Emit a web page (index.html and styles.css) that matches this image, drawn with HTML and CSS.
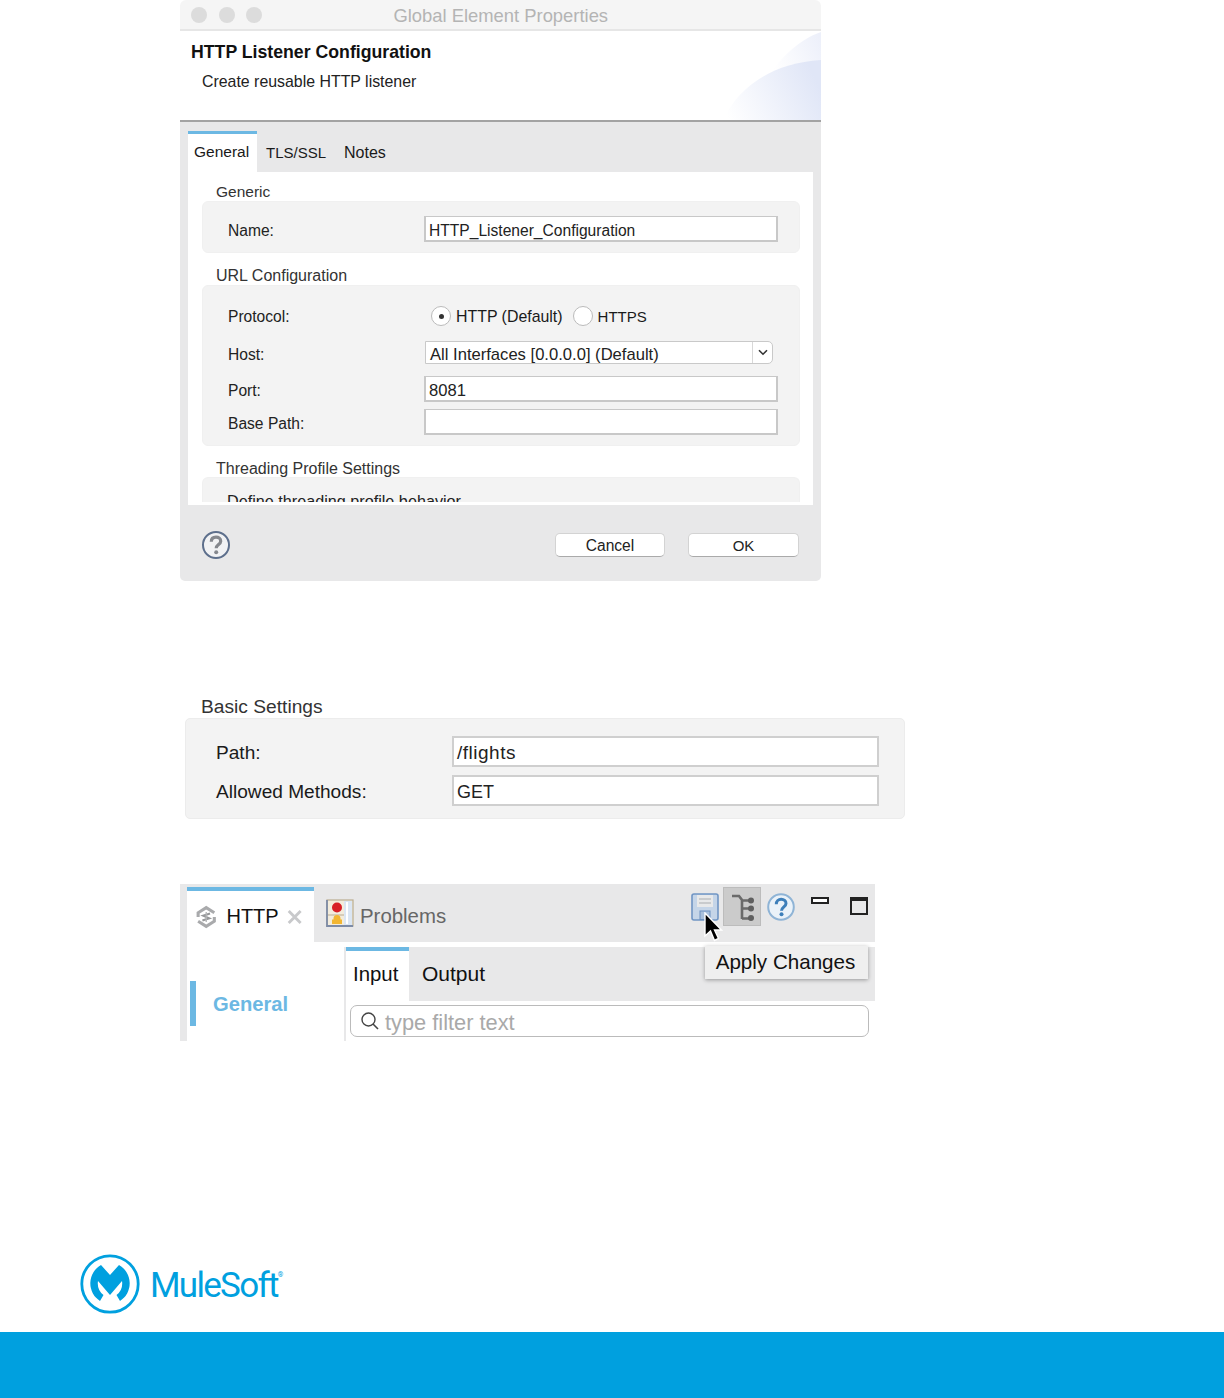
FILE: index.html
```html
<!DOCTYPE html>
<html lang="en">
<head>
<meta charset="utf-8">
<title>HTTP Listener Configuration</title>
<link rel="stylesheet" href="styles.css">
</head>
<body>
<div class="page">
  <section class="dialog">
    <div class="titlebar">
      <span class="light"></span><span class="light"></span><span class="light"></span>
      <span class="title">Global Element Properties</span>
    </div>
    <header class="dlg-head">
      <svg class="swoosh" viewBox="0 0 100 89" width="100" height="89" aria-hidden="true">
        <defs>
          <linearGradient id="sw1" x1="0" y1="0.6" x2="1" y2="0.2"><stop offset="0" stop-color="#fff"/><stop offset="1" stop-color="#edf0fa"/></linearGradient>
          <linearGradient id="sw2" x1="0" y1="0.8" x2="1" y2="0.5"><stop offset="0" stop-color="#fff"/><stop offset="1" stop-color="#e0e6f7"/></linearGradient>
        </defs>
        <path d="M48 44C58 30 76 9 100 1V30C80 31 62 36 48 44Z" fill="url(#sw1)"/>
        <path d="M2 89C18 55 52 32 100 29V89Z" fill="url(#sw2)"/>
      </svg>
      <h1 class="dlg-title">HTTP Listener Configuration</h1>
      <p class="dlg-sub">Create reusable HTTP listener</p>
    </header>
    <div class="dlg-body">
      <nav class="tabs">
        <span class="tab active">General</span>
        <span class="tab tls">TLS/SSL</span>
        <span class="tab notes">Notes</span>
      </nav>
      <div class="sheet">
        <h2 class="group-label first">Generic</h2>
        <div class="group name-group">
          <div class="row"><label>Name:</label><span class="input">HTTP_Listener_Configuration</span></div>
        </div>
        <h2 class="group-label url">URL Configuration</h2>
        <div class="group url-group">
          <div class="row protocol-row">
            <label>Protocol:</label>
            <div class="radios">
              <span class="radio on"></span><span class="radio-text first-option">HTTP (Default)</span>
              <span class="radio"></span><span class="radio-text https">HTTPS</span>
            </div>
          </div>
          <div class="row host-row">
            <label>Host:</label>
            <div class="combo"><span class="combo-text">All Interfaces [0.0.0.0] (Default)</span>
              <span class="combo-btn"><svg width="10" height="7" viewBox="0 0 10 7"><path d="M1 1.2 5 5.2 9 1.2" fill="none" stroke="#333" stroke-width="1.6"/></svg></span>
            </div>
          </div>
          <div class="row port-row"><label>Port:</label><span class="input">8081</span></div>
          <div class="row base-row"><label>Base Path:</label><span class="input"></span></div>
        </div>
        <h2 class="group-label thread">Threading Profile Settings</h2>
        <div class="group clip-group"><p class="clip-text">Define threading profile behavior</p></div>
      </div>
      <footer class="dlg-foot">
        <svg class="help" width="30" height="30" viewBox="0 0 30 30" aria-hidden="true">
          <circle cx="15" cy="15" r="13" fill="#f1f2f4" stroke="#5d6f8c" stroke-width="2"/>
          <path d="M10.3 11.8C10.3 8.8 12.3 7.2 15 7.2S19.7 8.8 19.7 11.2C19.7 14.4 15.2 14.6 15.2 18.2" fill="none" stroke="#85888e" stroke-width="3.2"/>
          <circle cx="15.2" cy="22.3" r="2" fill="#85888e"/>
        </svg>
        <div class="buttons">
          <button class="btn">Cancel</button>
          <button class="btn ok">OK</button>
        </div>
      </footer>
    </div>
  </section>

  <section class="basic">
    <h2 class="basic-label">Basic Settings</h2>
    <div class="basic-box">
      <div class="basic-row"><label>Path:</label><span class="basic-input path">/flights</span></div>
      <div class="basic-row"><label>Allowed Methods:</label><span class="basic-input">GET</span></div>
    </div>
  </section>

  <section class="editor">
    <div class="editor-bar">
      <div class="etab active">
        <svg width="24" height="26" viewBox="0 0 24 26" aria-hidden="true">
          <path d="M2.5 13V8L12 2 21.5 8" fill="none" stroke="#a9aaac" stroke-width="3.6"/>
          <path d="M21.5 13V18L12 24 2.5 18" fill="none" stroke="#a9aaac" stroke-width="3.6"/>
          <path d="M16.5 9 8.5 11.5 15.5 14.5 7.5 17" fill="none" stroke="#97989a" stroke-width="2.4"/>
          <path d="M12 7V19" stroke="#b4b5b7" stroke-width="1.6"/>
        </svg>
        <span class="etab-name http">HTTP</span>
        <svg class="close" width="18" height="18" viewBox="0 0 18 18" aria-hidden="true"><path d="M2 2 16 16M16 2 2 16" stroke="#c8c9cb" stroke-width="3.4"/></svg>
      </div>
      <div class="etab problems">
        <svg width="28" height="28" viewBox="0 0 28 28" aria-hidden="true">
          <rect x="1" y="1" width="26" height="26" fill="#f3ecdc" stroke="#b9ad92" stroke-width="1.2"/>
          <rect x="18" y="2" width="8" height="24" fill="#dbe6f3"/>
          <path d="M21 3V25" stroke="#fff" stroke-width="2"/>
          <path d="M2 16H18" stroke="#c9bfa8" stroke-width="1.4"/>
          <circle cx="11" cy="8.5" r="5" fill="#d81f26"/>
          <path d="M6 25V20.5H7.5V19.5A3.5 3.5 0 0 1 14.5 19.5V20.5H16V25Z" fill="#f2b632"/>
          <path d="M1 1V27H27" fill="none" stroke="#7d8ba6" stroke-width="1.8"/>
        </svg>
        <span class="etab-name muted">Problems</span>
      </div>
      <div class="toolbar">
        <svg class="tool" width="28" height="28" viewBox="0 0 28 28" aria-hidden="true">
          <rect x="1" y="1" width="26" height="26" rx="2" fill="#c5d5e8" stroke="#7095c4" stroke-width="1.6"/>
          <rect x="6" y="2" width="16" height="12" fill="#e8e9ea"/>
          <path d="M8 6H20M8 10H20" stroke="#bfc1c3" stroke-width="1.6"/>
          <rect x="9" y="18" width="10" height="8.5" fill="#a9c0dc" stroke="#6e92c0"/>
        </svg>
        <span class="tool-pressed">
          <svg width="26" height="28" viewBox="0 0 26 28" aria-hidden="true">
            <path d="M3 3H10L13 7V26M13 7.5H22M13 15.5H22M13 25.5H22" fill="none" stroke="#6a6a6a" stroke-width="2.6"/>
            <circle cx="22" cy="7.5" r="3" fill="#5f5f5f"/><circle cx="22" cy="15.5" r="3" fill="#5f5f5f"/><circle cx="22" cy="25" r="3" fill="#5f5f5f"/>
          </svg>
        </span>
        <svg class="tool" width="28" height="28" viewBox="0 0 28 28" aria-hidden="true">
          <circle cx="14" cy="14" r="12.8" fill="#eaf2f9" stroke="#8fb4d6" stroke-width="2"/>
          <path d="M9.3 11.2C9.3 8 11.5 6.3 14.2 6.3S19 8 19 10.5C19 13.8 14.5 14 14.5 17.8" fill="none" stroke="#3d7fba" stroke-width="3"/>
          <circle cx="14.5" cy="21.3" r="2" fill="#3d7fba"/>
        </svg>
        <span class="min-btn"></span>
        <span class="max-btn"></span>
      </div>
    </div>
    <div class="editor-main">
      <aside class="side"><span class="side-item">General</span></aside>
      <div class="pane">
        <div class="pane-tabs">
          <span class="ptab active">Input</span>
          <span class="ptab">Output</span>
        </div>
        <div class="search">
          <svg width="20" height="20" viewBox="0 0 20 20" aria-hidden="true"><circle cx="8.5" cy="8.5" r="6.5" fill="none" stroke="#444" stroke-width="1.4"/><path d="M13 13 18 18" stroke="#444" stroke-width="1.6"/></svg>
          <span class="search-text">type filter text</span>
        </div>
      </div>
    </div>
    <div class="tooltip">Apply Changes</div>
    <svg class="cursor" width="20" height="30" viewBox="0 0 20 30" aria-hidden="true"><path d="M2 1V24L7.5 19 11.5 28.5 15.5 26.5 11.5 18H18.5Z" fill="#000" stroke="#fff" stroke-width="1.4"/></svg>
  </section>

  <div class="brand">
    <svg width="60" height="60" viewBox="0 0 60 60" aria-label="MuleSoft logo">
      <circle cx="30" cy="30" r="28.2" fill="none" stroke="#00a0df" stroke-width="2.8"/>
      <path d="M21 11 30 21 39 11A21 21 0 0 1 40 47L36.5 41A15 15 0 0 0 42 27L30 41 18 27A15 15 0 0 0 23.5 41L20 47A21 21 0 0 1 21 11Z" fill="#00a0df"/>
    </svg>
    <span class="brand-name">MuleSoft<sup class="reg">®</sup></span>
  </div>
  <div class="bottom-bar"></div>
</div>
</body>
</html>
```
FILE: styles.css
```css
* { box-sizing: border-box; }
html, body { margin: 0; padding: 0; background: #fff; }
body { font-family: "Liberation Sans", Arial, sans-serif; color: #1a1a1a; }
h1, h2, p { margin: 0; font-weight: normal; }
.page { width: 1224px; height: 1398px; display: flex; flex-direction: column; overflow: hidden; }

/* Dialog */
.dialog { margin-left: 180px; width: 641px; height: 581px; display: flex; flex-direction: column; border-radius: 6px 6px 5px 5px; overflow: hidden; font-size: 15.6px; }
.titlebar { height: 31px; flex: none; background: #f5f5f5; border-bottom: 2px solid #e6e6e6; display: flex; align-items: center; padding-left: 11px; gap: 11.5px; }
.light { width: 16px; height: 16px; border-radius: 50%; background: #dcdcdc; }
.title { flex: 1; text-align: center; color: #b4b4b4; font-size: 18.4px; margin-left: -93px; padding-top: 3px; }
.dlg-head { height: 91px; flex: none; background: #fff; border-bottom: 2px solid #a3a3a3; position: relative; padding: 11px 0 0 11px; }
.swoosh { position: absolute; right: 0; top: 0; }
.dlg-title { font-size: 17.7px; font-weight: bold; color: #111; line-height: 21px; position: relative; }
.dlg-sub { font-size: 15.9px; line-height: 20px; margin: 9px 0 0 11px; position: relative; color: #222; }
.dlg-body { flex: 1; background: #e8e8e9; padding-top: 9px; display: flex; flex-direction: column; min-height: 0; }
.tabs { display: flex; height: 41px; flex: none; margin-left: 8px; }
.tab { line-height: 44px; }
.tab.active { padding: 0 6px; width: 69px; background: #fff; border-top: 3px solid #6cb8e3; line-height: 36px; font-size: 15.5px; }
.tab.tls { margin-left: 9px; font-size: 15px; }
.tab.notes { margin-left: 18px; font-size: 16px; }
.sheet { height: 333px; flex: none; background: #fff; margin: 0 8px; padding: 0 13px 0 14px; overflow: hidden; }
.group-label { font-size: 16px; line-height: 18px; padding-left: 14px; color: #333; }
.group-label.first { margin-top: 11px; font-size: 15.5px; }
.group-label.url { margin-top: 14px; }
.group-label.thread { margin-top: 14px; }
.group { background: #f3f3f3; border-radius: 6px; padding: 0 22px 0 25px; border: 1px solid #f0f0f0; }
.name-group { height: 52px; padding-top: 4px; display: flex; align-items: center; }
.url-group { height: 161px; display: flex; flex-direction: column; }
.row { display: grid; grid-template-columns: 196px 354px; align-items: center; }
.name-group .row { width: 100%; }
.row label { color: #222; padding-top: 4px; }
.row.protocol-row label { padding-top: 2px; }
.input { display: block; height: 26px; line-height: 24px; border: 2px solid #c8c8c8; border-top-width: 1.5px; background: #fff; padding: 1.5px 0 0 3px; color: #222; }
.protocol-row { height: 32px; margin-top: 14px; }
.radios { display: flex; align-items: center; padding-left: 6px; font-size: 15.9px; }
.radio { width: 20px; height: 20px; border-radius: 50%; border: 1px solid #bbb; background: #fff; position: relative; margin-left: 1px; }
.radio.on::after { content: ""; position: absolute; left: 6.5px; top: 6.5px; width: 5px; height: 5px; border-radius: 50%; background: #333; }
.radio-text { padding: 2px 10px 0 5px; }
.radio-text.first-option { padding-right: 9px; }
.radio-text.https { font-size: 15px; padding-top: 0; }
.host-row { height: 23px; margin-top: 9px; }
.combo { width: 348px; height: 23px; margin-left: 1px; display: flex; background: #fff; border: 1px solid #c9c9c9; border-radius: 0 5px 5px 0; }
.combo-text { flex: 1; padding-left: 4px; line-height: 25px; color: #222; font-size: 16.6px; white-space: nowrap; }
.combo-btn { width: 20px; border-left: 1px solid #d8d8d8; display: flex; align-items: center; justify-content: center; }
.port-row { height: 26px; margin-top: 12px; }
.port-row .input { font-size: 16.6px; }
.base-row { height: 26px; margin-top: 7px; }
.clip-group { height: 25px; margin-top: -1px; border-bottom: 0; border-radius: 6px 6px 0 0; overflow: hidden; padding-left: 24px; }
.clip-text { line-height: 18px; margin-top: 14px; color: #222; font-size: 16.2px; }
.dlg-foot { flex: 1; display: flex; align-items: center; justify-content: space-between; padding: 4px 22px 0 21px; }
.buttons { display: flex; gap: 23px; }
.btn { width: 110px; height: 24px; font: 15.6px "Liberation Sans", Arial, sans-serif; color: #222; background: #fff; border: 1px solid #d3d3d3; border-bottom-color: #aaa; border-radius: 5px; padding: 2px 0 0; }
.btn.ok { width: 111px; font-size: 15px; padding-top: 0; }

/* Basic settings */
.basic { margin: 116px 0 0 185px; width: 720px; }
.basic-label { font-size: 19.2px; line-height: 19px; padding: 0 0 2px 16px; color: #333; }
.basic-box { height: 101px; background: #f3f3f3; border: 1px solid #ececec; border-radius: 5px; padding: 17px 0 0 30px; display: flex; flex-direction: column; gap: 8px; font-size: 19.1px; }
.basic-row { display: grid; grid-template-columns: 236px 427px; align-items: center; }
.basic-row label { padding-top: 3px; }
.basic-input { height: 31px; line-height: 30px; background: #fff; border: 2px solid #cfcfcf; padding-left: 3px; color: #222; font-size: 18px; }
.basic-input.path { font-size: 19px; letter-spacing: 0.5px; }

/* Editor */
.editor { margin: 65px 0 0 180px; width: 695px; height: 157px; position: relative; font-size: 20px; background: #fff; }
.editor-bar { height: 58px; background: #e8e8e9; display: flex; padding: 3px 0 0 7px; }
.etab { display: flex; align-items: center; gap: 6px; padding: 0 12px; width: 127px; height: 55px; }
.etab.active { background: #fff; border-top: 4px solid #6cb8e3; padding-left: 9px; gap: 8px; }
.etab.problems { width: auto; padding-top: 3px; }
.etab.problems svg { margin-bottom: 6px; }
.etab-name { color: #111; }
.etab-name.http { margin-left: 2px; }
.etab-name.muted { color: #666; font-size: 20.4px; }
.toolbar { margin-left: auto; display: flex; align-items: flex-start; }
.tool { margin-top: 6px; }
.tool-pressed { width: 38px; height: 39px; background: #cbcbcb; border: 1px solid #bcbcbc; display: flex; align-items: center; justify-content: center; margin: 0 6px 0 4px; }
.min-btn { width: 18px; height: 7px; border: 2px solid #222; margin: 10px 0 0 16px; background: #fff; }
.max-btn { width: 18px; height: 18px; border: 2px solid #222; border-top-width: 4px; margin: 10px 7px 0 21px; }
.editor-main { display: flex; height: 99px; border-left: 7px solid #e8e8e9; }
.side { width: 157px; padding: 39px 0 0 3px; flex: none; }
.side-item { display: block; height: 45px; border-left: 6px solid #6cb8e3; padding-left: 17px; line-height: 46px; color: #6cb8e3; font-weight: bold; font-size: 20.2px; }
.pane { flex: 1; margin-top: 5px; border-left: 2px solid #e8e8e9; }
.pane-tabs { height: 54px; background: #e8e8e9; display: flex; }
.ptab { padding: 0 13px; line-height: 54px; color: #111; font-size: 21px; }
.ptab.active { width: 63px; padding: 0 0 0 7px; background: #fff; border-top: 4px solid #6cb8e3; line-height: 47px; font-size: 20.4px; }
.search { margin: 4px 6px 0 4px; height: 32px; border: 1px solid #bbb; border-radius: 7px; display: flex; align-items: center; gap: 5px; padding-left: 9px; }
.search-text { color: #a9a9a9; font-size: 21.8px; padding-top: 3px; }
.tooltip { position: absolute; left: 525px; top: 62px; width: 163px; height: 33px; padding-right: 2px; background: #efefef; box-shadow: 0 1px 4px rgba(0,0,0,.35); line-height: 32px; text-align: center; color: #111; font-size: 20.6px; }
.cursor { position: absolute; left: 523px; top: 28px; }

/* Brand */
.brand { margin: auto 0 18px 80px; display: flex; align-items: center; gap: 10px; }
.brand-name { font-family: "Roboto", "Liberation Sans", sans-serif; font-size: 35px; letter-spacing: -1.7px; color: #00a0df; line-height: 44px; padding-top: 4px; }
.reg { font-size: 7px; vertical-align: 20px; line-height: 0; }
.bottom-bar { height: 66px; flex: none; background: #00a0df; }
```
